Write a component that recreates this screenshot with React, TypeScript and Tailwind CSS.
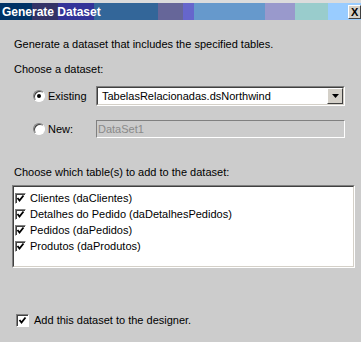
import React from 'react';

const font = { fontFamily: '"Liberation Sans", Arial, sans-serif' };

const Radio = ({ checked }: { checked?: boolean }) => (
  <div className="w-[12px] h-[12px] rounded-full border border-[#808080] border-r-white border-b-white bg-white flex items-center justify-center shadow-[inset_1px_1px_0_#404040]">
    {checked && <div className="w-[4px] h-[4px] rounded-full bg-black" />}
  </div>
);

const Check = ({ size = 11 }: { size?: number }) => (
  <div
    className={`${size === 13 ? 'w-[13px] h-[13px]' : 'w-[11px] h-[11px]'} bg-white border border-[#808080] border-r-white border-b-white shadow-[inset_1px_1px_0_#404040] flex items-center justify-center`}
  >
    <svg width="9" height="9" viewBox="0 0 9 9">
      <path d="M1.5 4 L3.5 6.5 L7.5 1.5" stroke="#000" strokeWidth="1.8" fill="none" />
    </svg>
  </div>
);

const tables = [
  'Clientes (daClientes)',
  'Detalhes do Pedido (daDetalhesPedidos)',
  'Pedidos (daPedidos)',
  'Produtos (daProdutos)',
];

export default function App() {
  return (
    <div className="w-[361px] h-[342px] bg-[#cccccc] flex flex-col text-[11px] text-black overflow-hidden" style={font}>
      <div className="h-[3px] bg-[#dcdcdc]" />
      <div className="h-[17px] flex items-center bg-[linear-gradient(90deg,#003366_0_32px,#333366_32px_58px,#333399_58px_94px,#336699_94px_158px,#666699_158px_183px,#6666cc_183px_194px,#6699cc_194px_265px,#9999cc_265px_295px,#99cccc_295px_328px,#99ccff_328px_100%)]">
        <span className="pl-[2px] text-white font-bold text-[12px] leading-none flex-1">Generate Dataset</span>
        <div className="w-[13px] h-[14px] bg-[#d4d0c8] border border-white border-r-[#404040] border-b-[#404040] text-[11px] font-bold leading-[12px] pl-[2px]">
          X
        </div>
      </div>

      <div className="flex flex-col pl-[14px] pr-[7px]">
        <div className="mt-[18px] leading-[13px]">Generate a dataset that includes the specified tables.</div>
        <div className="mt-[12px] leading-[13px]">Choose a dataset:</div>

        <div className="mt-[10px] flex items-center h-[20px]">
          <div className="ml-[19px] w-[15px]">
            <Radio checked />
          </div>
          <span className="w-[48px]">Existing</span>
          <div className="w-[249px] h-[20px] bg-white border border-[#808080] border-r-white border-b-white">
            <div className="h-full flex items-center border border-[#404040] border-r-[#d4d0c8] border-b-[#d4d0c8]">
              <span className="flex-1 pl-[4px]">TabelasRelacionadas.dsNorthwind</span>
              <div className="w-[16px] h-[16px] bg-[#d4d0c8] border border-white border-r-[#404040] border-b-[#404040] flex items-center justify-center">
                <svg width="7" height="4" viewBox="0 0 7 4">
                  <path d="M0 0 H7 L3.5 4 Z" fill="#000" />
                </svg>
              </div>
            </div>
          </div>
        </div>

        <div className="mt-[14px] flex items-center h-[18px]">
          <div className="ml-[19px] w-[15px]">
            <Radio />
          </div>
          <span className="w-[48px]">New:</span>
          <div className="w-[249px] h-[18px] bg-[#cccccc] border border-[#808080] border-r-white border-b-white flex items-center">
            <span className="pl-[1px] text-[#8a8a8a]">DataSet1</span>
          </div>
        </div>

        <div className="mt-[28px] leading-[13px]">Choose which table(s) to add to the dataset:</div>

        <div className="mt-[6px] -ml-[2px] w-[343px] h-[83px] bg-white border border-[#808080] border-r-white border-b-white">
          <div className="h-full border border-[#404040] border-r-[#d4d0c8] border-b-[#d4d0c8] pt-[3px] pl-[1px]">
            {tables.map((t) => (
              <div key={t} className="h-[16px] flex items-center">
                <Check />
                <span className="ml-[4px]">{t}</span>
              </div>
            ))}
          </div>
        </div>

        <div className="mt-[44px] flex items-center">
          <div className="ml-[2px]">
            <Check size={13} />
          </div>
          <span className="ml-[5px]">Add this dataset to the designer.</span>
        </div>
      </div>
    </div>
  );
}
